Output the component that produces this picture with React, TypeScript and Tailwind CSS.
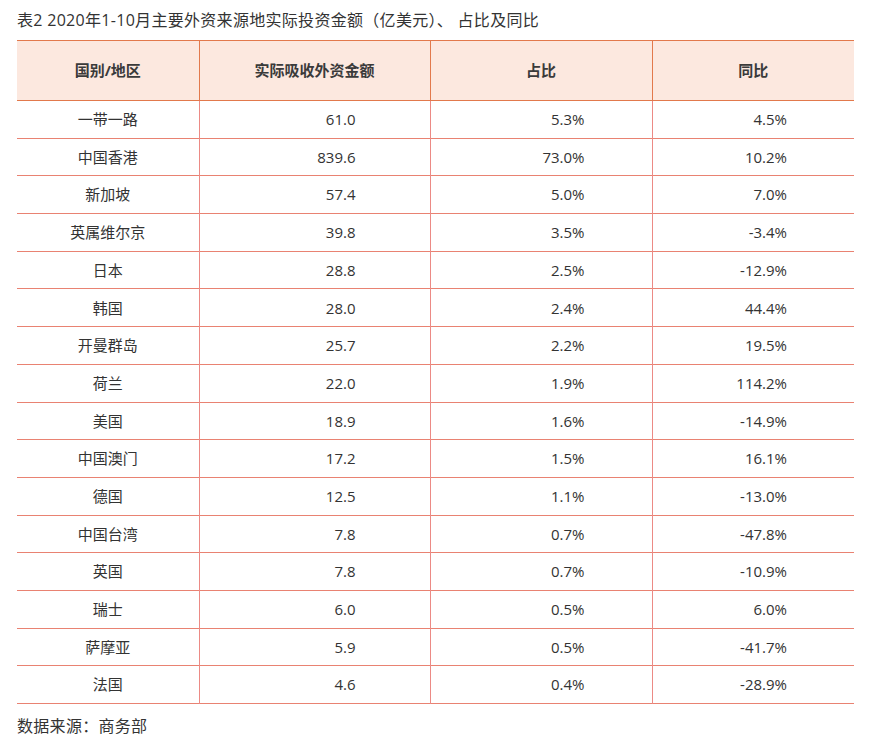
import React from 'react';

const rows: [string, string, string, string][] = [
  ['一带一路', '61.0', '5.3%', '4.5%'],
  ['中国香港', '839.6', '73.0%', '10.2%'],
  ['新加坡', '57.4', '5.0%', '7.0%'],
  ['英属维尔京', '39.8', '3.5%', '-3.4%'],
  ['日本', '28.8', '2.5%', '-12.9%'],
  ['韩国', '28.0', '2.4%', '44.4%'],
  ['开曼群岛', '25.7', '2.2%', '19.5%'],
  ['荷兰', '22.0', '1.9%', '114.2%'],
  ['美国', '18.9', '1.6%', '-14.9%'],
  ['中国澳门', '17.2', '1.5%', '16.1%'],
  ['德国', '12.5', '1.1%', '-13.0%'],
  ['中国台湾', '7.8', '0.7%', '-47.8%'],
  ['英国', '7.8', '0.7%', '-10.9%'],
  ['瑞士', '6.0', '0.5%', '6.0%'],
  ['萨摩亚', '5.9', '0.5%', '-41.7%'],
  ['法国', '4.6', '0.4%', '-28.9%'],
];

const font = { fontFamily: '"Open Sans", "Noto Sans CJK SC", sans-serif' };

export default function App() {
  return (
    <div className="w-[886px] h-[749px] bg-white text-[#333] overflow-hidden" style={font}>
      <div className="pl-[17px] pt-[9px] h-[40px] text-[16px] leading-[23px] tracking-[0.3px]">
        表2 2020年1-10月主要外资来源地实际投资金额（亿美元）、 占比及同比
      </div>
      <table className="ml-[17px] w-[837px] border-collapse table-fixed text-[15px]">
        <colgroup>
          <col className="w-[182px]" />
          <col className="w-[231px]" />
          <col className="w-[222px]" />
          <col className="w-[202px]" />
        </colgroup>
        <thead>
          <tr className="h-[60px] bg-[#fce8df] border-y-[1.5px] border-[#e2794c]">
            {['国别/地区', '实际吸收外资金额', '占比', '同比'].map((h, i) => (
              <th
                key={h}
                className={
                  'font-bold text-center text-[#3a3a3a] border-[#e2794c] ' +
                  (i > 0 ? 'border-l-[1.5px]' : '')
                }
              >
                {h}
              </th>
            ))}
          </tr>
        </thead>
        <tbody>
          {rows.map((r) => (
            <tr key={r[0]} className="h-[37.7px] border-b border-[#e98272]">
              <td className="text-center border-r border-[#ec8a85]">{r[0]}</td>
              <td className="text-right pr-[74px] border-r border-[#ec8a85]">{r[1]}</td>
              <td className="text-right pr-[67px] border-r border-[#ec8a85]">{r[2]}</td>
              <td className="text-right pr-[67px]">{r[3]}</td>
            </tr>
          ))}
        </tbody>
      </table>
      <div className="pl-[17px] pt-[11px] text-[16px] leading-[23px] tracking-[0.3px]">数据来源：商务部</div>
    </div>
  );
}
